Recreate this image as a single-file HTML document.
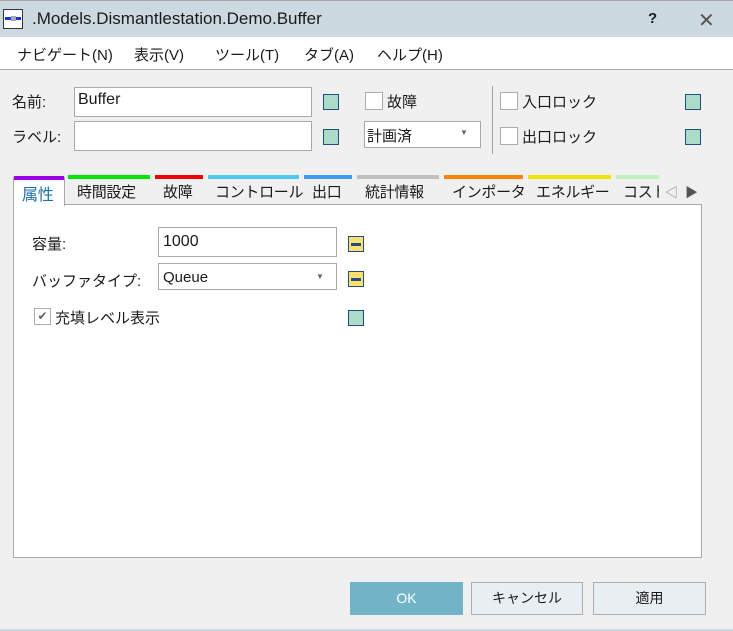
<!DOCTYPE html>
<html><head><meta charset="utf-8"><style>
*{box-sizing:border-box;margin:0;padding:0}
body{width:733px;height:631px;background:#f0f0f0;position:relative;overflow:hidden;font-family:"Liberation Sans","Noto Sans CJK JP",sans-serif;font-size:15px;color:#1a1a1a}
.a{position:absolute;white-space:nowrap}
.box{position:absolute;background:#fff;border:1px solid #a9a9a9}
.sq{position:absolute;width:16px;height:16px;background:#acdcc8;border:1px solid #1e4f80}
.cb{position:absolute;width:18px;height:18px;background:#fff;border:1px solid #adadad}
.ye{position:absolute;width:16px;height:16px;background:#ffe070;border:1px solid #1e4f80}
.ye:after{content:"";position:absolute;left:2px;right:2px;top:6px;height:3px;background:#1e4f80}
.bar{position:absolute;top:175px;height:4px}
.btn{position:absolute;top:582px;height:33px;border:1px solid #adadad;background:#e9eef2;text-align:center;line-height:31px;font-size:14px}
.t{position:absolute;top:181px;font-size:15px;white-space:nowrap;letter-spacing:-0.3px}
</style></head><body>
<div class="a" style="left:0;top:0;width:733px;height:37px;background:#ccd9e0;border-top:1px solid #a6a6a6"></div>
<div class="a" style="left:3px;top:9px;width:20px;height:20px;background:#fff;border:1px solid #333"></div>
<div class="a" style="left:5px;top:17px;width:16px;height:3px;background:#1a33d6"></div>
<div class="a" style="left:11px;top:16px;width:5px;height:5px;background:#9fa6c0"></div>
<div class="a" style="left:32px;top:9px;font-size:17px;color:#1a1a1a">.Models.Dismantlestation.Demo.Buffer</div>
<div class="a" style="left:648px;top:10px;font-size:15px;font-weight:bold">?</div>
<div class="a" style="left:698px;top:8px;font-size:20px;color:#555">✕</div>
<div class="a" style="left:0;top:37px;width:733px;height:33px;background:#fff;border-bottom:1px solid #a8a8a8"></div>
<div class="a" style="left:17px;top:44px">ナビゲート(N)</div>
<div class="a" style="left:134px;top:44px">表示(V)</div>
<div class="a" style="left:215px;top:44px">ツール(T)</div>
<div class="a" style="left:304px;top:44px">タブ(A)</div>
<div class="a" style="left:377px;top:44px">ヘルプ(H)</div>

<div class="a" style="left:12px;top:91px">名前:</div>
<div class="box" style="left:74px;top:87px;width:238px;height:30px"></div>
<div class="a" style="left:78px;top:91px;font-size:16px">Buffer</div>
<div class="a" style="left:12px;top:126px">ラベル:</div>
<div class="box" style="left:74px;top:121px;width:238px;height:30px"></div>
<div class="sq" style="left:323px;top:94px"></div>
<div class="sq" style="left:323px;top:129px"></div>
<div class="cb" style="left:365px;top:92px"></div>
<div class="a" style="left:387px;top:91px">故障</div>
<div class="box" style="left:364px;top:121px;width:117px;height:27px"></div>
<div class="a" style="left:367px;top:125px">計画済</div>
<div class="a" style="left:460px;top:128px;font-size:8px;color:#666">▼</div>
<div class="a" style="left:492px;top:86px;width:1px;height:68px;background:#a0a0a0"></div>
<div class="cb" style="left:500px;top:92px"></div>
<div class="a" style="left:522px;top:91px">入口ロック</div>
<div class="cb" style="left:500px;top:127px"></div>
<div class="a" style="left:522px;top:126px">出口ロック</div>
<div class="sq" style="left:685px;top:94px"></div>
<div class="sq" style="left:685px;top:129px"></div>

<div class="box" style="left:13px;top:204px;width:689px;height:354px;border-color:#a9a9a9"></div>
<div class="box" style="left:13px;top:177px;width:52px;height:29px;border-bottom:none;border-color:#a9a9a9"></div>
<div class="bar" style="left:14px;top:176px;width:50px;background:#9b00e6"></div>
<div class="bar" style="left:68px;width:82px;background:#00e600"></div>
<div class="bar" style="left:155px;width:48px;background:#f20000"></div>
<div class="bar" style="left:208px;width:91px;background:#4dc8ef"></div>
<div class="bar" style="left:304px;width:48px;background:#3f9bf0"></div>
<div class="bar" style="left:357px;width:82px;background:#c0c0c0"></div>
<div class="bar" style="left:444px;width:79px;background:#ff8400"></div>
<div class="bar" style="left:528px;width:83px;background:#f0e600"></div>
<div class="bar" style="left:616px;width:43px;background:#bff0bf"></div>
<div class="t" style="left:22px;color:#1b6fa8;font-size:16px">属性</div>
<div class="t" style="left:77px">時間設定</div>
<div class="t" style="left:163px">故障</div>
<div class="t" style="left:215px">コントロール</div>
<div class="t" style="left:312px">出口</div>
<div class="t" style="left:365px">統計情報</div>
<div class="t" style="left:452px">インポータ</div>
<div class="t" style="left:536px">エネルギー</div>
<div class="t" style="left:623px;width:36px;overflow:hidden">コスト</div>
<div class="a" style="left:665px;top:182px;font-size:13px;color:#888">◁</div>
<div class="a" style="left:685px;top:182px;font-size:13px;color:#555">▶</div>

<div class="a" style="left:32px;top:233px">容量:</div>
<div class="box" style="left:158px;top:227px;width:179px;height:30px"></div>
<div class="a" style="left:163px;top:233px;font-size:16px">1000</div>
<div class="ye" style="left:348px;top:236px"></div>
<div class="a" style="left:32px;top:270px">バッファタイプ:</div>
<div class="box" style="left:158px;top:263px;width:179px;height:27px"></div>
<div class="a" style="left:163px;top:269px;font-size:15px">Queue</div>
<div class="a" style="left:316px;top:272px;font-size:8px;color:#666">▼</div>
<div class="ye" style="left:348px;top:271px"></div>
<div class="cb" style="left:34px;top:308px;width:17px;height:17px;font-size:12px;color:#666;text-align:center;line-height:15px">✔</div>
<div class="a" style="left:55px;top:307px">充填レベル表示</div>
<div class="sq" style="left:348px;top:310px"></div>

<div class="btn" style="left:350px;width:113px;background:#73b3c7;border-color:#73b3c7;color:#fff">OK</div>
<div class="btn" style="left:471px;width:112px">キャンセル</div>
<div class="btn" style="left:593px;width:113px">適用</div>
<div class="a" style="left:0;top:629px;width:733px;height:2px;background:#ccd9e0"></div>
</body></html>
